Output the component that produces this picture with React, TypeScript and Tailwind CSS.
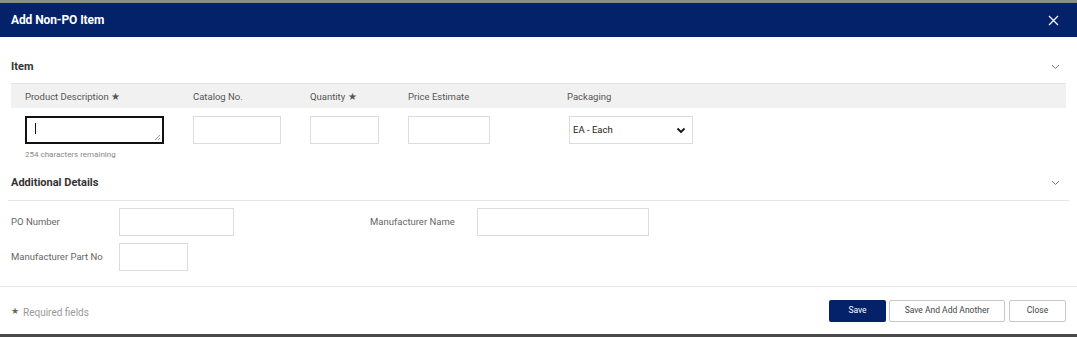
import React from 'react'

function Chevron() {
  return (
    <svg width="9" height="6" viewBox="0 0 9 6" className="text-[#777]">
      <path d="M1 1l3.5 3.5L8 1" fill="none" stroke="currentColor" strokeWidth="1" />
    </svg>
  )
}

function Field({ w }: { w: string }) {
  return <div className={`${w} h-[28px] border border-[#dcdcdc] bg-white`} />
}

export default function App() {
  return (
    <div className="w-[1077px] h-[337px] flex flex-col bg-white font-['Roboto','Liberation_Sans',sans-serif] text-[#444] overflow-hidden">
      <div className="h-[3px] bg-[#8c8c8c]" />

      {/* header */}
      <div className="h-[34px] bg-[#04226a] flex items-center justify-between pl-[11px] pr-[18px]">
        <h1 className="text-white text-[12px] font-bold tracking-[-0.1px]">Add Non-PO Item</h1>
        <svg width="11" height="11" viewBox="0 0 11 11">
          <path d="M1 1l9 9M10 1l-9 9" stroke="white" strokeWidth="1.2" />
        </svg>
      </div>

      {/* body */}
      <div className="h-[250px] px-[11px] border-b border-[#e6e6e6]">
        <div className="flex items-center justify-between pt-[22px] pr-[6px]">
          <h2 className="text-[11px] font-bold text-[#333] leading-[16px]">Item</h2>
          <Chevron />
        </div>

        <div className="mt-[8px] h-[25px] bg-[#f1f1f1] border-t border-[#e3e3e3] flex items-center pl-[14px] pt-[2px] text-[9.5px] text-[#555]">
          <div className="w-[168px]">Product Description ★</div>
          <div className="w-[117px]">Catalog No.</div>
          <div className="w-[98px]">Quantity ★</div>
          <div className="w-[159px]">Price Estimate</div>
          <div>Packaging</div>
        </div>

        <div className="flex pl-[14px] mt-[8px]">
          <div className="w-[168px]">
            <div className="relative w-[139px] h-[28px] border-2 border-[#111] bg-white">
              <div className="absolute left-[8px] top-[5px] w-[1px] h-[11px] bg-[#111]" />
              <svg width="7" height="7" viewBox="0 0 7 7" className="absolute right-[1px] bottom-[1px]">
                <path d="M6 1L1 6M6 4L4 6" stroke="#777" strokeWidth="0.8" />
              </svg>
            </div>
            <div className="text-[8px] text-[#888] mt-[5px]">254 characters remaining</div>
          </div>
          <div className="w-[117px]"><Field w="w-[88px]" /></div>
          <div className="w-[98px]"><Field w="w-[69px]" /></div>
          <div className="w-[161px]"><Field w="w-[82px]" /></div>
          <div className="w-[124px] h-[28px] border border-[#dcdcdc] flex items-center justify-between pl-[3px] pr-[6px] text-[9.5px] text-[#222]">
            <span>EA - Each</span>
            <svg width="10" height="7" viewBox="0 0 10 7">
              <path d="M1.5 1.5L5 5l3.5-3.5" fill="none" stroke="#111" strokeWidth="1.8" />
            </svg>
          </div>
        </div>

        <div className="flex items-center justify-between mt-[14px] pr-[6px]">
          <h2 className="text-[11px] font-bold text-[#333] leading-[16px]">Additional Details</h2>
          <Chevron />
        </div>
        <div className="mt-[9px] -mx-[3px] border-t border-[#e6e6e6]" />

        <div className="flex items-center mt-[7px] text-[9.5px] text-[#666]">
          <div className="w-[108px]">PO Number</div>
          <Field w="w-[115px]" />
          <div className="w-[136px]" />
          <div className="w-[107px]">Manufacturer Name</div>
          <Field w="w-[172px]" />
        </div>
        <div className="flex items-center mt-[7px] text-[9.5px] text-[#666]">
          <div className="w-[108px]">Manufacturer Part No</div>
          <Field w="w-[69px]" />
        </div>
      </div>

      {/* footer */}
      <div className="h-[47px] flex items-center justify-between px-[11px]">
        <div className="flex items-center gap-[4px] text-[10px] text-[#999] pt-[3px]">
          <span className="text-[9px] text-[#666]">★</span>
          <span>Required fields</span>
        </div>
        <div className="flex items-center text-[8.5px]">
          <button className="w-[57px] h-[22px] rounded-[2px] bg-[#04226a] text-white">Save</button>
          <button className="w-[116px] h-[22px] ml-[3px] rounded-[2px] border border-[#c8c8c8] bg-white text-[#444]">Save And Add Another</button>
          <button className="w-[57px] h-[22px] ml-[4px] rounded-[2px] border border-[#c8c8c8] bg-white text-[#444]">Close</button>
        </div>
      </div>

      <div className="h-[3px] bg-[#4a4a4a]" />
    </div>
  )
}
